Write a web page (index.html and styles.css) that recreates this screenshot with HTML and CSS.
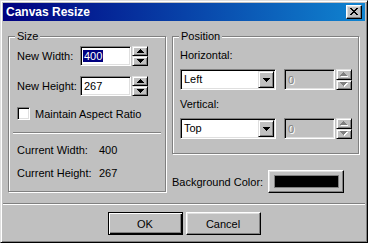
FILE: index.html
```html
<!DOCTYPE html>
<html lang="en">
<head>
    <meta charset="UTF-8">
    <meta name="viewport" content="width=device-width, initial-scale=1.0">
    <link rel="stylesheet" href="styles.css">
</head>
<body>
    <div class="window">
        <!-- Title bar -->
        <div class="titlebar">
            <span class="title">Canvas Resize</span>
            <button class="close-btn" type="button" aria-label="Close">
                <svg width="8" height="7" viewBox="0 0 8 7"><path d="M0 0h2v1H0zM6 0h2v1H6zM1 1h2v1H1zM5 1h2v1H5zM2 2h4v1H2zM3 3h2v1H3zM2 4h4v1H2zM1 5h2v1H1zM5 5h2v1H5zM0 6h2v1H0zM6 6h2v1H6z"/></svg>
            </button>
        </div>

        <div class="dialog-body">
            <div class="main">
                <!-- Size group -->
                <div class="group size-group">
                    <span class="group-title">Size</span>
                    <div class="field-row">
                        <span class="field-label">New Width:</span>
                        <div class="edit"><span class="selected">400</span></div>
                        <div class="spinner">
                            <span class="spin"><svg width="7" height="4" viewBox="0 0 7 4"><path d="M3 0h1v1h1v1h1v1h1v1H0V3h1V2h1V1h1z"/></svg></span>
                            <span class="spin"><svg width="7" height="4" viewBox="0 0 7 4"><path d="M0 0h7v1H6v1H5v1H4v1H3V3H2V2H1V1H0z"/></svg></span>
                        </div>
                    </div>
                    <div class="field-row">
                        <span class="field-label">New Height:</span>
                        <div class="edit"><span>267</span></div>
                        <div class="spinner">
                            <span class="spin"><svg width="7" height="4" viewBox="0 0 7 4"><path d="M3 0h1v1h1v1h1v1h1v1H0V3h1V2h1V1h1z"/></svg></span>
                            <span class="spin"><svg width="7" height="4" viewBox="0 0 7 4"><path d="M0 0h7v1H6v1H5v1H4v1H3V3H2V2H1V1H0z"/></svg></span>
                        </div>
                    </div>
                    <div class="check-row">
                        <span class="checkbox"></span>
                        <span>Maintain Aspect Ratio</span>
                    </div>
                    <div class="separator inner-sep"></div>
                    <div class="info-row">
                        <span class="info-label">Current Width:</span>
                        <span>400</span>
                    </div>
                    <div class="info-row">
                        <span class="info-label">Current Height:</span>
                        <span>267</span>
                    </div>
                </div>

                <div class="right-col">
                    <!-- Position group -->
                    <div class="group position-group">
                        <span class="group-title">Position</span>
                        <div class="pos-label">Horizontal:</div>
                        <div class="combo-row">
                            <div class="combo">
                                <span class="combo-text">Left</span>
                                <span class="combo-btn"><svg width="7" height="4" viewBox="0 0 7 4"><path d="M0 0h7v1H6v1H5v1H4v1H3V3H2V2H1V1H0z"/></svg></span>
                            </div>
                            <div class="edit disabled"><span>0</span></div>
                            <div class="spinner disabled">
                                <span class="spin"><svg width="8" height="5" viewBox="0 0 8 5"><path class="hl" d="M4 1h1v1h1v1h1v1h1v1H1V4h1V3h1V2h1z"/><path d="M3 0h1v1h1v1h1v1h1v1H0V3h1V2h1V1h1z"/></svg></span>
                                <span class="spin"><svg width="8" height="5" viewBox="0 0 8 5"><path class="hl" d="M1 1h7v1H7v1H6v1H5v1H4V4H3V3H2V2H1z"/><path d="M0 0h7v1H6v1H5v1H4v1H3V3H2V2H1V1H0z"/></svg></span>
                            </div>
                        </div>
                        <div class="pos-label">Vertical:</div>
                        <div class="combo-row">
                            <div class="combo">
                                <span class="combo-text">Top</span>
                                <span class="combo-btn"><svg width="7" height="4" viewBox="0 0 7 4"><path d="M0 0h7v1H6v1H5v1H4v1H3V3H2V2H1V1H0z"/></svg></span>
                            </div>
                            <div class="edit disabled"><span>0</span></div>
                            <div class="spinner disabled">
                                <span class="spin"><svg width="8" height="5" viewBox="0 0 8 5"><path class="hl" d="M4 1h1v1h1v1h1v1h1v1H1V4h1V3h1V2h1z"/><path d="M3 0h1v1h1v1h1v1h1v1H0V3h1V2h1V1h1z"/></svg></span>
                                <span class="spin"><svg width="8" height="5" viewBox="0 0 8 5"><path class="hl" d="M1 1h7v1H7v1H6v1H5v1H4V4H3V3H2V2H1z"/><path d="M0 0h7v1H6v1H5v1H4v1H3V3H2V2H1V1H0z"/></svg></span>
                            </div>
                        </div>
                    </div>

                    <!-- Background colour -->
                    <div class="color-row">
                        <span class="color-label">Background Color:</span>
                        <button class="color-btn" type="button"><span class="swatch"></span></button>
                    </div>
                </div>
            </div>

            <div class="separator"></div>

            <div class="buttons">
                <button class="btn default" type="button">OK</button>
                <button class="btn" type="button">Cancel</button>
            </div>
        </div>
    </div>
</body>
</html>
```

FILE: styles.css
```css
* {
    box-sizing: border-box;
}

body {
    margin: 0;
    background: #c0c0c0;
}

.window {
    width: 368px;
    height: 243px;
    display: flex;
    flex-direction: column;
    padding: 2px;
    background: #c0c0c0;
    border: 1px solid;
    border-color: #dfdfdf #000 #000 #dfdfdf;
    box-shadow: inset 1px 1px #fff, inset -1px -1px #808080;
    font-family: "Liberation Sans", Arial, sans-serif;
    font-size: 11px;
    color: #000;
}

/* Title bar */
.titlebar {
    height: 18px;
    display: flex;
    align-items: center;
    justify-content: space-between;
    padding: 0 3px;
    background: linear-gradient(90deg, #000080, #1084d0);
}

.title {
    color: #fff;
    font-size: 12px;
    font-weight: bold;
}

.close-btn {
    width: 16px;
    height: 14px;
    padding: 0 1px 1px 0;
    display: flex;
    align-items: center;
    justify-content: center;
    background: #c0c0c0;
    border: 1px solid;
    border-color: #fff #000 #000 #fff;
    box-shadow: inset -1px -1px #808080, inset 1px 1px #dfdfdf;
}

.close-btn svg,
.spin svg,
.combo-btn svg {
    display: block;
    fill: #000;
}

/* Body */
.dialog-body {
    flex: 1;
    display: flex;
    flex-direction: column;
}

.main {
    display: flex;
    gap: 6px;
    margin: 15px 6px 0 5px;
}

.group {
    position: relative;
    border: 1px solid #808080;
    box-shadow: inset 1px 1px #fff, 1px 1px #fff;
}

.group-title {
    position: absolute;
    top: -7px;
    left: 6px;
    padding: 0 2px;
    line-height: 13px;
    background: #c0c0c0;
}

.size-group {
    width: 158px;
    height: 156px;
    padding: 9px 4px 0 8px;
    display: flex;
    flex-direction: column;
}

.field-row {
    display: flex;
    align-items: center;
    height: 20px;
}

.field-row + .field-row {
    margin-top: 10px;
}

.field-label {
    width: 63px;
}

/* Sunken edit fields */
.edit {
    width: 51px;
    height: 20px;
    display: flex;
    align-items: center;
    padding-left: 2px;
    background: #fff;
    border: 1px solid;
    border-color: #808080 #fff #fff #808080;
    box-shadow: inset 1px 1px #000, inset -1px -1px #dfdfdf;
}

.edit span {
    padding: 0 1px;
    line-height: 12px;
}

.edit .selected {
    background: #000080;
    color: #fff;
}

.spinner {
    width: 16px;
    height: 20px;
    margin-left: 1px;
    display: flex;
    flex-direction: column;
}

.spin {
    flex: 1;
    display: flex;
    align-items: center;
    justify-content: center;
    background: #c0c0c0;
    border: 1px solid;
    border-color: #dfdfdf #000 #000 #dfdfdf;
    box-shadow: inset 1px 1px #fff, inset -1px -1px #808080;
}

.check-row {
    display: flex;
    align-items: center;
    height: 13px;
    margin-top: 11px;
}

.checkbox {
    width: 13px;
    height: 13px;
    margin-right: 5px;
    background: #fff;
    border: 1px solid;
    border-color: #808080 #fff #fff #808080;
    box-shadow: inset 1px 1px #000, inset -1px -1px #dfdfdf;
}

.separator {
    height: 2px;
    border-top: 1px solid #808080;
    border-bottom: 1px solid #fff;
}

.inner-sep {
    margin: 12px 0 0 -4px;
}

.info-row {
    display: flex;
    line-height: 13px;
    margin-top: 10px;
}

.info-label {
    width: 82px;
}

/* Right column */
.right-col {
    width: 187px;
    display: flex;
    flex-direction: column;
}

.position-group {
    height: 118px;
    padding: 12px 0 0 7px;
}

.pos-label {
    line-height: 13px;
}

.combo-row {
    display: flex;
    align-items: center;
    height: 21px;
    margin-top: 7px;
}

.combo-row + .pos-label {
    margin-top: 8px;
}

.combo {
    width: 96px;
    height: 21px;
    display: flex;
    padding: 1px;
    background: #fff;
    border: 1px solid;
    border-color: #808080 #fff #fff #808080;
    box-shadow: inset 1px 1px #000, inset -1px -1px #dfdfdf;
}

.combo-text {
    flex: 1;
    padding-left: 2px;
    line-height: 17px;
}

.combo-btn {
    width: 16px;
    display: flex;
    align-items: center;
    justify-content: center;
    background: #c0c0c0;
    border: 1px solid;
    border-color: #dfdfdf #000 #000 #dfdfdf;
    box-shadow: inset 1px 1px #fff, inset -1px -1px #808080;
}

.edit.disabled {
    height: 21px;
    margin-left: 8px;
    background: #c0c0c0;
    color: #808080;
    text-shadow: 1px 1px #fff;
}

.spinner.disabled {
    height: 21px;
}

.spinner.disabled svg {
    fill: #808080;
}

.spinner.disabled svg .hl {
    fill: #fff;
}

.color-row {
    display: flex;
    align-items: center;
    margin-top: 16px;
}

.color-label {
    width: 96px;
}

.color-btn {
    width: 76px;
    height: 23px;
    padding: 0;
    display: flex;
    align-items: center;
    justify-content: center;
    background: #c0c0c0;
    border: 1px solid;
    border-color: #fff #000 #000 #fff;
    box-shadow: inset -1px -1px #808080, inset 1px 1px #dfdfdf;
}

.swatch {
    width: 65px;
    height: 13px;
    background: #000;
    border: 1px solid #808080;
}

.dialog-body > .separator {
    margin-top: 10px;
}

/* Bottom buttons */
.buttons {
    display: flex;
    justify-content: center;
    gap: 3px;
    margin-top: 7px;
}

.btn {
    width: 75px;
    height: 23px;
    padding: 0;
    font: inherit;
    color: #000;
    background: #c0c0c0;
    border: 1px solid;
    border-color: #fff #000 #000 #fff;
    box-shadow: inset -1px -1px #808080, inset 1px 1px #dfdfdf;
}

.btn.default {
    border-color: #000;
    box-shadow: inset 1px 1px #fff, inset -1px -1px #000, inset -2px -2px #808080;
}
```
